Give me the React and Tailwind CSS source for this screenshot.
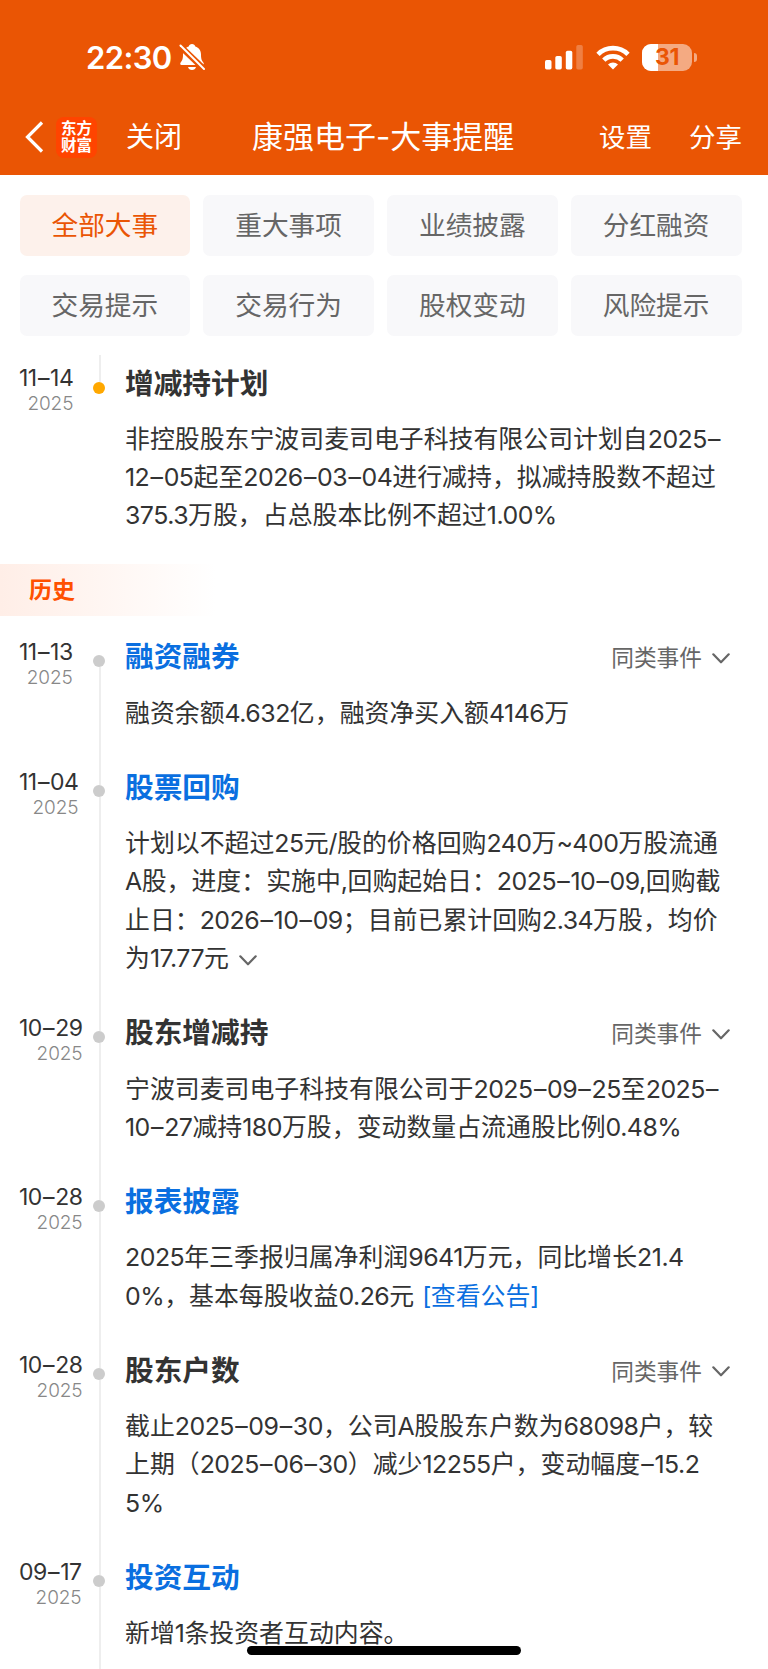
import React from 'react';
import clsx from 'clsx';

const TABS = ['全部大事', '重大事项', '业绩披露', '分红融资', '交易提示', '交易行为', '股权变动', '风险提示'];

const UPCOMING = {
  date: '11–14',
  year: '2025',
  title: '增减持计划',
  lines: [
    '非控股股东宁波司麦司电子科技有限公司计划自2025–',
    '12–05起至2026–03–04进行减持，拟减持股数不超过',
    '375.3万股，占总股本比例不超过1.00%',
  ],
};

const HISTORY = [
  {
    date: '11–13',
    year: '2025',
    title: '融资融券',
    link: true,
    similar: true,
    lines: ['融资余额4.632亿，融资净买入额4146万'],
  },
  {
    date: '11–04',
    year: '2025',
    title: '股票回购',
    link: true,
    expandable: true,
    lines: [
      '计划以不超过25元/股的价格回购240万~400万股流通',
      'A股，进度：实施中,回购起始日：2025–10–09,回购截',
      '止日：2026–10–09；目前已累计回购2.34万股，均价',
      '为17.77元',
    ],
  },
  {
    date: '10–29',
    year: '2025',
    title: '股东增减持',
    similar: true,
    lines: ['宁波司麦司电子科技有限公司于2025–09–25至2025–', '10–27减持180万股，变动数量占流通股比例0.48%'],
  },
  {
    date: '10–28',
    year: '2025',
    title: '报表披露',
    link: true,
    notice: '[查看公告]',
    lines: ['2025年三季报归属净利润9641万元，同比增长21.4', '0%，基本每股收益0.26元'],
  },
  {
    date: '10–28',
    year: '2025',
    title: '股东户数',
    similar: true,
    lines: ['截止2025–09–30，公司A股股东户数为68098户，较', '上期（2025–06–30）减少12255户，变动幅度–15.2', '5%'],
  },
  {
    date: '09–17',
    year: '2025',
    title: '投资互动',
    link: true,
    lines: ['新增1条投资者互动内容。'],
  },
];

const Chevron = ({ className }) => (
  <svg viewBox="0 0 18 11" className={clsx('w-[18px] h-[11px] shrink-0', className)} fill="none" stroke="#666" strokeWidth="2.200" strokeLinecap="round" strokeLinejoin="round">
    <path d="M1.3 1.3 9 9.3l7.7-8" />
  </svg>
);

// latin runs are set a little tighter than the chinese text, dashes get some air
const Mixed = ({ text }) =>
  text.split(/(–|[0-9A-Za-z.,%~/[\]]+)/).map((part, i) => {
    if (part === '–') return <span key={i} className="mx-[1.200px] tracking-[-0.5px]">–</span>;
    return i % 2 ? <span key={i} className="tracking-[-0.5px]">{part}</span> : part;
  });

const StatusBar = () => (
  <div className="flex items-center h-[114px] pl-[86px] pr-[71px]">
    <span className="text-[31px] leading-none font-semibold tracking-[-0.6px] w-[93px]">22:30</span>
    <svg viewBox="0 0 26 28" className="w-[26px] h-[28px]">
      <path fill="#fff" d="M13 1c1.7 0 3 1 3.3 2.500C20 4.600 22 7.500 22 11.500c0 5 1 6 2.500 8.300.6 1 .3 2.200-1 2.200H2.500c-1.300 0-1.600-1.200-1-2.200C3 17.500 4 16.500 4 11.500c0-4 2-6.900 5.700-8C10 2 11.300 1 13 1zM9 24h8c-.5 1.900-2 3-4 3s-3.500-1.100-4-3z" />
      <path stroke="#ea5504" strokeWidth="6" d="M-1 1 27 28" />
      <path stroke="#fff" strokeWidth="2" strokeLinecap="round" d="M1.500 2.500 25 26" />
    </svg>
    <div className="flex items-center ml-auto">
      <svg viewBox="0 0 38 25" className="w-[38px] h-[25px]" fill="#fff">
        <rect x="0" y="15" width="6.500" height="9.500" rx="1.700" />
        <rect x="10.300" y="11" width="6.500" height="13.500" rx="1.700" />
        <rect x="20.800" y="5.700" width="6.500" height="18.800" rx="1.700" />
        <rect x="31.300" y="0" width="6.500" height="24.500" rx="1.700" opacity="0.25" />
      </svg>
      <svg viewBox="0 0 34 25" className="w-[34px] h-[25px] ml-[13px]" fill="none" stroke="#fff" strokeWidth="4.700">
        <path d="M2 9.300a21.300 21.300 0 0 1 30 0" />
        <path d="M7.800 15.100a13.100 13.100 0 0 1 18.400 0" />
        <path fill="#fff" stroke="none" d="M17 24.500l-5-5a7.200 7.200 0 0 1 10 0z" />
      </svg>
      <div className="relative flex items-center justify-center ml-3 w-[50px] h-[27px] rounded-[9px] overflow-hidden bg-[#f4aa82]">
        <div className="absolute inset-y-0 left-0 w-4 bg-white" />
        <span className="relative text-[23px] leading-none font-bold tracking-[-0.5px] text-[#ea5504]">31</span>
      </div>
      <div className="ml-[1.500px] w-[3.500px] h-[9px] rounded-r-full bg-[#f4aa82]" />
    </div>
  </div>
);

const NavBar = () => (
  <div className="flex items-center h-[46px] pl-[25px] pr-[26px] whitespace-nowrap">
    <svg viewBox="0 0 19 32" className="w-[19px] h-8" fill="none" stroke="#fff" strokeWidth="3.200">
      <path d="M17 1.500 2.500 16 17 30.500" />
    </svg>
    <div className="ml-3 w-[41px] h-[41px] rounded-[8px] bg-[#ff4400] flex flex-col items-center justify-center text-[15.500px] leading-[17px] font-bold">
      <span>东方</span>
      <span>财富</span>
    </div>
    <span className="ml-[29px] text-[28px] leading-none">关闭</span>
    <span className="ml-[70px] pb-0.5 text-[31px] leading-none">康强电子-大事提醒</span>
    <span className="ml-auto text-[26.500px] leading-none">设置</span>
    <span className="ml-[37px] text-[26.500px] leading-none">分享</span>
  </div>
);

const EventItem = ({ item, active, first }) => (
  <div className="flex">
    <div className="w-[93px] pl-[19px] shrink-0 flex items-start">
      <div className="text-right whitespace-nowrap">
        <div className="text-[23px] leading-[30px] text-[#333]">
          <Mixed text={item.date} />
        </div>
        <div className="text-[19px] leading-[22px] tracking-[-0.1px] font-light text-[#888]">{item.year}</div>
      </div>
    </div>
    <div className="w-3 shrink-0 flex flex-col">
      <div className={clsx('w-0.5 ml-1.5', active && '-mt-2 h-[27px] bg-[#eee]', first && 'h-[18.500px]', !active && !first && 'h-[18px] bg-[#eee]')} />
      <div className={clsx('w-3 h-3 rounded-full', active ? 'bg-[#ffa800]' : 'bg-[#ccc]')} />
      {!active && <div className="w-0.5 ml-1.5 flex-1 bg-[#eee]" />}
    </div>
    <div className={clsx('flex-1 ml-5', active ? 'pb-[29px]' : 'pb-[35.300px]')}>
      <div className="flex items-center justify-between h-10 pr-[38px]">
        <h3 className={clsx('pt-px text-[28.700px] leading-10 font-bold', item.link ? 'text-[#0a6fe0]' : 'text-[#333]')}>{item.title}</h3>
        {item.similar && (
          <div className="flex items-center gap-2.5 pt-[3px] text-[22.700px] text-[#666]">
            同类事件
            <Chevron />
          </div>
        )}
      </div>
      <div className="mt-[16.800px] text-[24.900px] leading-[38.350px] text-[#333] whitespace-nowrap">
        {item.lines.map((line, i) => (
          <p key={i} className="h-[38.350px]">
            <Mixed text={line} />
            {item.notice && i === item.lines.length - 1 && (
              <a className="ml-2 text-[#0a6fe0]">
                <Mixed text={item.notice} />
              </a>
            )}
            {item.expandable && i === item.lines.length - 1 && <Chevron className="inline-block ml-2.5" />}
          </p>
        ))}
      </div>
    </div>
  </div>
);

export default function App() {
  return (
    <div className="relative w-[768px] h-[1669px] overflow-hidden bg-white font-['Inter','Noto_Sans_CJK_SC',sans-serif]">
      <header className="h-[175px] bg-[#ea5504] text-white">
        <StatusBar />
        <NavBar />
      </header>

      <div className="grid grid-cols-4 gap-x-[13px] gap-y-[19.500px] pt-[19.500px] pl-[19.500px] pr-[26.500px]">
        {TABS.map((tab, i) => (
          <div key={tab} className={clsx('h-[61px] rounded-[7px] flex items-center justify-center text-[26.700px]', i === 0 ? 'bg-[#fdf1eb] text-[#ea5504]' : 'bg-[#f8f8fa] text-[#666]')}>
            {tab}
          </div>
        ))}
      </div>

      <div className="pt-[27px]">
        <EventItem item={UPCOMING} active />
      </div>

      <div className="h-[52px] w-[216px] pl-[29px] flex items-center bg-linear-to-r from-[#ffeee7] to-white text-[#ff5000] text-[23px] font-bold">
        历史
      </div>

      <div className="pt-[21px]">
        {HISTORY.map((item, i) => (
          <EventItem key={i} item={item} first={i === 0} />
        ))}
      </div>

      <div className="absolute left-[247px] top-[1646px] w-[274px] h-[9px] rounded-full bg-black" />
    </div>
  );
}
